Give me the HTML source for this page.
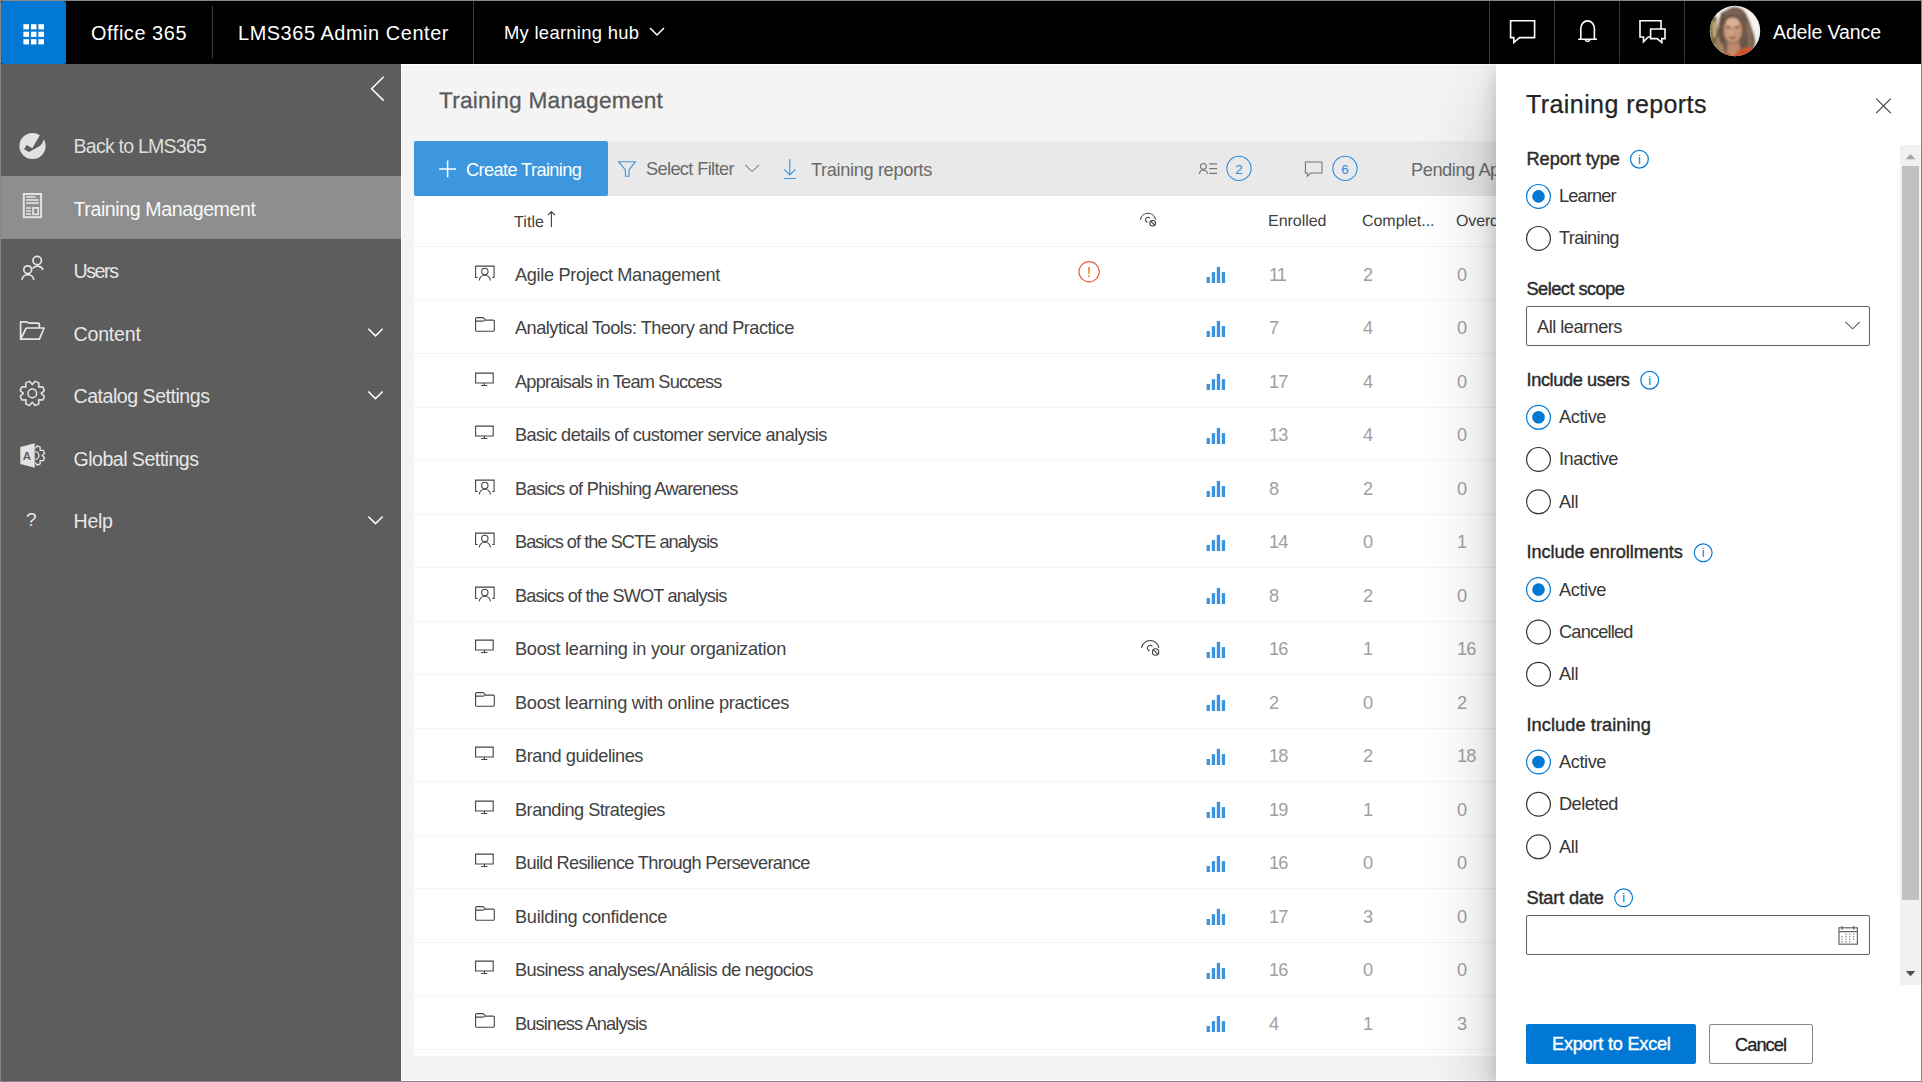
<!DOCTYPE html>
<html lang="en"><head><meta charset="utf-8"><title>LMS365 Admin Center - Training Management</title>
<style>
html,body{margin:0;padding:0;background:#fff;}
body{width:1922px;height:1082px;overflow:hidden;position:relative;font-family:"Liberation Sans",sans-serif;}
#app{position:absolute;left:0;top:0;width:1922px;height:1082px;overflow:hidden;background:#f4f4f4;}
.t{position:absolute;height:40px;line-height:40px;white-space:nowrap;}
.abs{position:absolute;}
svg{position:absolute;left:0;top:0;overflow:visible;}
#frame{position:absolute;left:0;top:0;width:1920px;height:1080px;border:1px solid #878787;pointer-events:none;z-index:50;}
</style></head><body><div id="app">

<div class="abs" style="left:401px;top:64px;width:1521px;height:1017px;background:#fff"></div>
<div class="abs" style="left:402px;top:65px;width:1520px;height:1015px;background:#f4f4f4"></div>
<div class="abs" style="left:414px;top:141px;width:1508px;height:55px;background:#e9e9e9"></div>
<div class="abs" style="left:414px;top:196px;width:1508px;height:860px;background:#fff"></div>
<div class="abs" style="left:414px;top:141px;width:194px;height:55px;background:#3c97df;border-radius:2px"></div>
<div class="abs" style="left:0;top:0;width:1922px;height:64px;background:#000"></div>
<div class="abs" style="left:1px;top:1px;width:65px;height:63px;background:#0078d4;border-radius:2px"></div>
<div class="abs" style="left:212px;top:6px;width:1px;height:52px;background:#3d3d3d"></div>
<div class="abs" style="left:473px;top:1px;width:1px;height:63px;background:#3d3d3d"></div>
<div class="abs" style="left:1489px;top:1px;width:1px;height:63px;background:#3a3a3a"></div>
<div class="abs" style="left:1554px;top:1px;width:1px;height:63px;background:#3a3a3a"></div>
<div class="abs" style="left:1619px;top:1px;width:1px;height:63px;background:#3a3a3a"></div>
<div class="abs" style="left:1684px;top:1px;width:1px;height:63px;background:#3a3a3a"></div>
<div class="t " style="left:91.0px;top:13.3px;font-size:19.90px;color:#fff;letter-spacing:0.572px;">Office 365</div>
<div class="t " style="left:238.0px;top:13.3px;font-size:19.90px;color:#fff;letter-spacing:0.571px;">LMS365 Admin Center</div>
<div class="t " style="left:504.0px;top:12.6px;font-size:18.40px;color:#fff;letter-spacing:0.291px;">My learning hub</div>
<div class="t " style="left:1773.0px;top:12.0px;font-size:19.50px;color:#fff;letter-spacing:-0.114px;">Adele Vance</div>
<div class="abs" style="left:0;top:64px;width:401px;height:1018px;background:#5d5d5d"></div>
<div class="abs" style="left:0;top:176px;width:401px;height:63px;background:#8e8e8e"></div>
<div class="t " style="left:73.5px;top:126.3px;font-size:19.60px;color:#dedede;letter-spacing:-0.794px;">Back to LMS365</div>
<div class="t " style="left:73.5px;top:189.3px;font-size:19.60px;color:#f8f8f8;letter-spacing:-0.413px;">Training Management</div>
<div class="t " style="left:73.5px;top:251.3px;font-size:19.60px;color:#e8e8e8;letter-spacing:-1.421px;">Users</div>
<div class="t " style="left:73.5px;top:314.3px;font-size:19.60px;color:#e8e8e8;letter-spacing:-0.192px;">Content</div>
<div class="t " style="left:73.5px;top:376.3px;font-size:19.60px;color:#e8e8e8;letter-spacing:-0.488px;">Catalog Settings</div>
<div class="t " style="left:73.5px;top:439.3px;font-size:19.60px;color:#e8e8e8;letter-spacing:-0.530px;">Global Settings</div>
<div class="t " style="left:73.5px;top:501.3px;font-size:19.60px;color:#e8e8e8;letter-spacing:-0.271px;">Help</div>
<div class="t " style="left:26.0px;top:500.0px;font-size:19.00px;color:#e6e6e6;">?</div>
<div class="t " style="left:439.0px;top:80.0px;font-size:22.70px;color:#5a5a5a;letter-spacing:0.223px;-webkit-text-stroke:0.30px #5a5a5a;text-rendering:geometricPrecision;">Training Management</div>
<div class="t " style="left:466.0px;top:150.0px;font-size:18.20px;color:#fff;letter-spacing:-0.603px;">Create Training</div>
<div class="t " style="left:646.0px;top:149.0px;font-size:18.20px;color:#6a6a6a;letter-spacing:-0.632px;">Select Filter</div>
<div class="t " style="left:811.0px;top:150.0px;font-size:18.20px;color:#6a6a6a;letter-spacing:-0.352px;">Training reports</div>
<div class="t " style="left:1411.0px;top:150.0px;font-size:18.20px;color:#6a6a6a;letter-spacing:-0.424px;">Pending Approvals</div>
<div class="t " style="left:514.0px;top:203.0px;font-size:16.00px;color:#424242;letter-spacing:0.092px;text-rendering:geometricPrecision;">Title</div>
<div class="t " style="left:1268.0px;top:202.0px;font-size:16.00px;color:#424242;letter-spacing:-0.029px;text-rendering:geometricPrecision;">Enrolled</div>
<div class="t " style="left:1362.0px;top:202.0px;font-size:16.00px;color:#424242;letter-spacing:-0.046px;text-rendering:geometricPrecision;">Complet...</div>
<div class="t " style="left:1456.0px;top:202.0px;font-size:16.00px;color:#424242;letter-spacing:-0.145px;text-rendering:geometricPrecision;">Overdue</div>
<div class="abs" style="left:414px;top:246px;width:1508px;height:1px;background:#f4f4f4"></div>
<div class="t " style="left:515.0px;top:255.0px;font-size:18.20px;color:#424242;letter-spacing:-0.346px;">Agile Project Management</div>
<div class="t " style="left:1269.0px;top:255.0px;font-size:18.20px;color:#a0a0a0;letter-spacing:-0.900px;">11</div>
<div class="t " style="left:1363.0px;top:255.0px;font-size:18.20px;color:#a0a0a0;">2</div>
<div class="t " style="left:1457.0px;top:255.0px;font-size:18.20px;color:#a0a0a0;">0</div>
<div class="abs" style="left:414px;top:300px;width:1508px;height:1px;background:#f4f4f4"></div>
<div class="t " style="left:515.0px;top:308.0px;font-size:18.20px;color:#424242;letter-spacing:-0.507px;">Analytical Tools: Theory and Practice</div>
<div class="t " style="left:1269.0px;top:308.0px;font-size:18.20px;color:#a0a0a0;">7</div>
<div class="t " style="left:1363.0px;top:308.0px;font-size:18.20px;color:#a0a0a0;">4</div>
<div class="t " style="left:1457.0px;top:308.0px;font-size:18.20px;color:#a0a0a0;">0</div>
<div class="abs" style="left:414px;top:353px;width:1508px;height:1px;background:#f4f4f4"></div>
<div class="t " style="left:515.0px;top:362.0px;font-size:18.20px;color:#424242;letter-spacing:-0.791px;">Appraisals in Team Success</div>
<div class="t " style="left:1269.0px;top:362.0px;font-size:18.20px;color:#a0a0a0;letter-spacing:-0.900px;">17</div>
<div class="t " style="left:1363.0px;top:362.0px;font-size:18.20px;color:#a0a0a0;">4</div>
<div class="t " style="left:1457.0px;top:362.0px;font-size:18.20px;color:#a0a0a0;">0</div>
<div class="abs" style="left:414px;top:407px;width:1508px;height:1px;background:#f4f4f4"></div>
<div class="t " style="left:515.0px;top:415.0px;font-size:18.20px;color:#424242;letter-spacing:-0.569px;">Basic details of customer service analysis</div>
<div class="t " style="left:1269.0px;top:415.0px;font-size:18.20px;color:#a0a0a0;letter-spacing:-0.900px;">13</div>
<div class="t " style="left:1363.0px;top:415.0px;font-size:18.20px;color:#a0a0a0;">4</div>
<div class="t " style="left:1457.0px;top:415.0px;font-size:18.20px;color:#a0a0a0;">0</div>
<div class="abs" style="left:414px;top:460px;width:1508px;height:1px;background:#f4f4f4"></div>
<div class="t " style="left:515.0px;top:469.0px;font-size:18.20px;color:#424242;letter-spacing:-0.703px;">Basics of Phishing Awareness</div>
<div class="t " style="left:1269.0px;top:469.0px;font-size:18.20px;color:#a0a0a0;">8</div>
<div class="t " style="left:1363.0px;top:469.0px;font-size:18.20px;color:#a0a0a0;">2</div>
<div class="t " style="left:1457.0px;top:469.0px;font-size:18.20px;color:#a0a0a0;">0</div>
<div class="abs" style="left:414px;top:514px;width:1508px;height:1px;background:#f4f4f4"></div>
<div class="t " style="left:515.0px;top:522.0px;font-size:18.20px;color:#424242;letter-spacing:-0.966px;">Basics of the SCTE analysis</div>
<div class="t " style="left:1269.0px;top:522.0px;font-size:18.20px;color:#a0a0a0;letter-spacing:-0.900px;">14</div>
<div class="t " style="left:1363.0px;top:522.0px;font-size:18.20px;color:#a0a0a0;">0</div>
<div class="t " style="left:1457.0px;top:522.0px;font-size:18.20px;color:#a0a0a0;">1</div>
<div class="abs" style="left:414px;top:567px;width:1508px;height:1px;background:#f4f4f4"></div>
<div class="t " style="left:515.0px;top:576.0px;font-size:18.20px;color:#424242;letter-spacing:-0.840px;">Basics of the SWOT analysis</div>
<div class="t " style="left:1269.0px;top:576.0px;font-size:18.20px;color:#a0a0a0;">8</div>
<div class="t " style="left:1363.0px;top:576.0px;font-size:18.20px;color:#a0a0a0;">2</div>
<div class="t " style="left:1457.0px;top:576.0px;font-size:18.20px;color:#a0a0a0;">0</div>
<div class="abs" style="left:414px;top:621px;width:1508px;height:1px;background:#f4f4f4"></div>
<div class="t " style="left:515.0px;top:629.0px;font-size:18.20px;color:#424242;letter-spacing:-0.258px;">Boost learning in your organization</div>
<div class="t " style="left:1269.0px;top:629.0px;font-size:18.20px;color:#a0a0a0;letter-spacing:-0.900px;">16</div>
<div class="t " style="left:1363.0px;top:629.0px;font-size:18.20px;color:#a0a0a0;">1</div>
<div class="t " style="left:1457.0px;top:629.0px;font-size:18.20px;color:#a0a0a0;letter-spacing:-0.900px;">16</div>
<div class="abs" style="left:414px;top:674px;width:1508px;height:1px;background:#f4f4f4"></div>
<div class="t " style="left:515.0px;top:683.0px;font-size:18.20px;color:#424242;letter-spacing:-0.309px;">Boost learning with online practices</div>
<div class="t " style="left:1269.0px;top:683.0px;font-size:18.20px;color:#a0a0a0;">2</div>
<div class="t " style="left:1363.0px;top:683.0px;font-size:18.20px;color:#a0a0a0;">0</div>
<div class="t " style="left:1457.0px;top:683.0px;font-size:18.20px;color:#a0a0a0;">2</div>
<div class="abs" style="left:414px;top:728px;width:1508px;height:1px;background:#f4f4f4"></div>
<div class="t " style="left:515.0px;top:736.0px;font-size:18.20px;color:#424242;letter-spacing:-0.473px;">Brand guidelines</div>
<div class="t " style="left:1269.0px;top:736.0px;font-size:18.20px;color:#a0a0a0;letter-spacing:-0.900px;">18</div>
<div class="t " style="left:1363.0px;top:736.0px;font-size:18.20px;color:#a0a0a0;">2</div>
<div class="t " style="left:1457.0px;top:736.0px;font-size:18.20px;color:#a0a0a0;letter-spacing:-0.900px;">18</div>
<div class="abs" style="left:414px;top:781px;width:1508px;height:1px;background:#f4f4f4"></div>
<div class="t " style="left:515.0px;top:790.0px;font-size:18.20px;color:#424242;letter-spacing:-0.520px;">Branding Strategies</div>
<div class="t " style="left:1269.0px;top:790.0px;font-size:18.20px;color:#a0a0a0;letter-spacing:-0.900px;">19</div>
<div class="t " style="left:1363.0px;top:790.0px;font-size:18.20px;color:#a0a0a0;">1</div>
<div class="t " style="left:1457.0px;top:790.0px;font-size:18.20px;color:#a0a0a0;">0</div>
<div class="abs" style="left:414px;top:835px;width:1508px;height:1px;background:#f4f4f4"></div>
<div class="t " style="left:515.0px;top:843.0px;font-size:18.20px;color:#424242;letter-spacing:-0.663px;">Build Resilience Through Perseverance</div>
<div class="t " style="left:1269.0px;top:843.0px;font-size:18.20px;color:#a0a0a0;letter-spacing:-0.900px;">16</div>
<div class="t " style="left:1363.0px;top:843.0px;font-size:18.20px;color:#a0a0a0;">0</div>
<div class="t " style="left:1457.0px;top:843.0px;font-size:18.20px;color:#a0a0a0;">0</div>
<div class="abs" style="left:414px;top:888px;width:1508px;height:1px;background:#f4f4f4"></div>
<div class="t " style="left:515.0px;top:897.0px;font-size:18.20px;color:#424242;letter-spacing:-0.297px;">Building confidence</div>
<div class="t " style="left:1269.0px;top:897.0px;font-size:18.20px;color:#a0a0a0;letter-spacing:-0.900px;">17</div>
<div class="t " style="left:1363.0px;top:897.0px;font-size:18.20px;color:#a0a0a0;">3</div>
<div class="t " style="left:1457.0px;top:897.0px;font-size:18.20px;color:#a0a0a0;">0</div>
<div class="abs" style="left:414px;top:942px;width:1508px;height:1px;background:#f4f4f4"></div>
<div class="t " style="left:515.0px;top:950.0px;font-size:18.20px;color:#424242;letter-spacing:-0.628px;">Business analyses/Análisis de negocios</div>
<div class="t " style="left:1269.0px;top:950.0px;font-size:18.20px;color:#a0a0a0;letter-spacing:-0.900px;">16</div>
<div class="t " style="left:1363.0px;top:950.0px;font-size:18.20px;color:#a0a0a0;">0</div>
<div class="t " style="left:1457.0px;top:950.0px;font-size:18.20px;color:#a0a0a0;">0</div>
<div class="abs" style="left:414px;top:995px;width:1508px;height:1px;background:#f4f4f4"></div>
<div class="t " style="left:515.0px;top:1004.0px;font-size:18.20px;color:#424242;letter-spacing:-0.823px;">Business Analysis</div>
<div class="t " style="left:1269.0px;top:1004.0px;font-size:18.20px;color:#a0a0a0;">4</div>
<div class="t " style="left:1363.0px;top:1004.0px;font-size:18.20px;color:#a0a0a0;">1</div>
<div class="t " style="left:1457.0px;top:1004.0px;font-size:18.20px;color:#a0a0a0;">3</div>
<div class="abs" style="left:414px;top:1049px;width:1508px;height:1px;background:#f4f4f4"></div>
<svg width="1922" height="1082" viewBox="0 0 1922 1082">
<rect x="23.4" y="24.2" width="5.6" height="5.2" fill="#fff"/>
<rect x="30.9" y="24.2" width="5.6" height="5.2" fill="#fff"/>
<rect x="38.4" y="24.2" width="5.6" height="5.2" fill="#fff"/>
<rect x="23.4" y="31.7" width="5.6" height="5.2" fill="#fff"/>
<rect x="30.9" y="31.7" width="5.6" height="5.2" fill="#fff"/>
<rect x="38.4" y="31.7" width="5.6" height="5.2" fill="#fff"/>
<rect x="23.4" y="39.2" width="5.6" height="5.2" fill="#fff"/>
<rect x="30.9" y="39.2" width="5.6" height="5.2" fill="#fff"/>
<rect x="38.4" y="39.2" width="5.6" height="5.2" fill="#fff"/>
<path d="M383.7 76.8 L371.6 88.7 L383.7 100.6" fill="none" stroke="#fff" stroke-width="1.5"/>
<path d="M368.3 328.8 L375.5 335.9 L382.7 328.8" fill="none" stroke="#fff" stroke-width="1.5"/>
<path d="M368.3 391.5 L375.5 398.6 L382.7 391.5" fill="none" stroke="#fff" stroke-width="1.5"/>
<path d="M368.3 516.5 L375.5 523.6 L382.7 516.5" fill="none" stroke="#fff" stroke-width="1.5"/>
<path d="M650 28 L657 35 L664 28" fill="none" stroke="#fff" stroke-width="1.5"/>
<circle cx="32.5" cy="146" r="13.1" fill="#e2e2e2"/>
<path d="M24.1 149.2 L26.6 145.1 L32.3 148.3 L40.4 134.2 L44.5 131 L48 137 L43.7 139.6 Q42.5 144.5 38.5 146.8 L28.9 152 Z" fill="#5d5d5d"/>
<rect x="23.8" y="194" width="17.3" height="23.2" fill="none" stroke="#e4e4e4" stroke-width="2"/>
<path d="M26.2 196.9 H35.5" stroke="#e4e4e4" stroke-width="1.6"/>
<path d="M26.2 200 H38.7" stroke="#e4e4e4" stroke-width="1.6"/>
<path d="M26.2 203 H38.7" stroke="#e4e4e4" stroke-width="1.6"/>
<path d="M26.2 208 H31" stroke="#e4e4e4" stroke-width="1.6"/>
<path d="M26.2 211 H31" stroke="#e4e4e4" stroke-width="1.6"/>
<path d="M26.2 214 H31" stroke="#e4e4e4" stroke-width="1.6"/>
<rect x="33" y="207.9" width="5.2" height="6.4" fill="none" stroke="#e4e4e4" stroke-width="1.7"/>
<g fill="none" stroke="#e6e6e6" stroke-width="1.7">
<circle cx="37.2" cy="260.5" r="4.2"/>
<path d="M32.6 268.6 A6 6 0 0 1 43 269.9"/>
<circle cx="27.7" cy="269.7" r="3.9"/>
<path d="M21.9 279.8 A6 6 0 0 1 33.8 279.8"/>
</g>
<path d="M20.6 339.1 V321.9 H26.6 L28.9 323.1 H38 Q39.4 323.1 39.4 324.5 V328 M26.2 328 H44.1 L39.4 339.1 H20.6 L26.2 328" fill="none" stroke="#e6e6e6" stroke-width="1.7" stroke-linejoin="round"/>
<path d="M32.3 384.5 L35.09 381.32 L38.87 382.88 L38.59 387.11 L42.82 386.83 L44.38 390.61 L41.2 393.4 L44.38 396.19 L42.82 399.97 L38.59 399.69 L38.87 403.92 L35.09 405.48 L32.3 402.3 L29.51 405.48 L25.73 403.92 L26.01 399.69 L21.78 399.97 L20.22 396.19 L23.4 393.4 L20.22 390.61 L21.78 386.83 L26.01 387.11 L25.73 382.88 L29.51 381.32 Z" fill="none" stroke="#e6e6e6" stroke-width="1.5" stroke-linejoin="round"/>
<circle cx="32.3" cy="393.4" r="4.3" fill="none" stroke="#e6e6e6" stroke-width="1.5"/>
<clipPath id="gclip"><rect x="35.2" y="440" width="14" height="32"/></clipPath>
<g clip-path="url(#gclip)"><path d="M35 448.3 L37.2 445.95 L40.19 447.19 L40.09 450.41 L43.31 450.31 L44.55 453.3 L42.2 455.5 L44.55 457.7 L43.31 460.69 L40.09 460.59 L40.19 463.81 L37.2 465.05 L35 462.7 L32.8 465.05 L29.81 463.81 L29.91 460.59 L26.69 460.69 L25.45 457.7 L27.8 455.5 L25.45 453.3 L26.69 450.31 L29.91 450.41 L29.81 447.19 L32.8 445.95 Z" fill="none" stroke="#e6e6e6" stroke-width="1.3" stroke-linejoin="round"/>
<circle cx="35" cy="455.5" r="3.9" fill="none" stroke="#e6e6e6" stroke-width="1.3"/></g>
<path d="M20.3 446.9 L34.7 443.3 V467.7 L20.3 464.1 Z" fill="#e2e2e2"/>
<text x="26.9" y="459.9" font-family="Liberation Sans, sans-serif" font-weight="bold" font-size="11.5" text-anchor="middle" fill="#5d5d5d">A</text>
<g fill="none" stroke="#fff" stroke-width="1.6" stroke-linejoin="miter">
<path d="M1510.6 20.8 H1534.6 V37.6 H1519.5 L1513.8 42.6 V37.6 H1510.6 Z"/>
<path d="M1578.2 39.2 H1597 M1580.8 39.2 V28.5 A6.8 7.6 0 0 1 1594.4 28.5 V39.2 M1585.2 39.6 A2.5 2.5 0 0 0 1590 39.6"/>
<path d="M1661 29 V20.8 H1640 V37 H1643.5 V41.8 L1648.2 37 H1650"/>
<path d="M1650.6 29 H1665 V38.6 H1661.8 V42.6 L1657.2 38.6 H1650.6 Z"/>
</g>
<defs><clipPath id="avc"><circle cx="1735" cy="31" r="25.2"/></clipPath><filter id="avb" x="-20%" y="-20%" width="140%" height="140%"><feGaussianBlur stdDeviation="0.9"/></filter></defs>
<g clip-path="url(#avc)"><rect x="1708" y="4" width="54" height="54" fill="#f6f4f1"/><g filter="url(#avb)">
<path d="M1709 18 L1716.5 16 L1717.5 44 L1710 46 Z" fill="#7b6b42"/>
<path d="M1712.5 22 L1715.5 21 L1716 36 L1713 38 Z" fill="#c8b27c"/>
<path d="M1724.5 12 Q1729 7 1736 7.2 Q1743 8 1746.5 15 Q1750.5 24 1753.5 34 Q1757 44 1752 51 L1746 57 H1721 Q1713.5 50 1715.5 40 Q1717.5 30 1719 22 Q1720 15 1722 12 Z" fill="#6e5848"/>
<path d="M1716.5 38 Q1715 47 1721 55 L1727 55 Q1721 46 1722 34 Z" fill="#a98b63"/>
<path d="M1747 22 Q1752 32 1752 46 L1748 50 Q1750 36 1745 24 Z" fill="#8d745c"/>
<path d="M1724 11 Q1733 8 1742 12 L1740 16 Q1732 12 1725 16 Z" fill="#7d6552"/>
<ellipse cx="1732.8" cy="30.5" rx="9.2" ry="12.8" fill="#c7977b"/>
<ellipse cx="1732.5" cy="22.5" rx="6.5" ry="4.6" fill="#dcb397"/>
<ellipse cx="1731" cy="33" rx="3.2" ry="3.6" fill="#d3a486"/>
<ellipse cx="1728.3" cy="27.2" rx="2.3" ry="0.9" fill="#5b4135"/><ellipse cx="1737.3" cy="27.2" rx="2.3" ry="0.9" fill="#5b4135"/>
<ellipse cx="1732.8" cy="37.8" rx="3.1" ry="1.1" fill="#8c544b"/>
<path d="M1741 20 Q1744 30 1741.5 42 L1746 44 Q1749 30 1744 17 Z" fill="#6e5848"/>
<path d="M1724.5 20 Q1722.5 30 1724.5 41 L1720 44 Q1718 30 1722 17 Z" fill="#66503f"/>
<path d="M1727.5 42 Q1733 46.5 1739 41.5 L1741 53 H1727 Z" fill="#c18d70"/>
<path d="M1724 54 Q1731 51.5 1738 50.5 Q1745 48 1750 46.5 L1754 52 L1746 58 H1722 Z" fill="#d5562a"/>
<path d="M1728 52 L1733 57 L1738.5 50.5 Z" fill="#c8957a"/>
</g></g>
<path d="M439.2 168.9 H456 M447.6 160.5 V177.3" stroke="#fff" stroke-width="1.5" fill="none"/>
<path d="M618.6 161.7 H635.4 L629 170 V176.3 H625.4 V170 Z" fill="none" stroke="#3c97df" stroke-width="1.1" stroke-linejoin="miter"/>
<path d="M745.2 165 L752.1 171.6 L759 165" fill="none" stroke="#8a8a8a" stroke-width="1.1"/>
<path d="M789.8 159.3 V174.6 M784.2 169.4 L789.8 175 L795.4 169.4 M784 178.5 H795.8" fill="none" stroke="#3c97df" stroke-width="1.2"/>
<g fill="none" stroke="#777" stroke-width="1.1"><circle cx="1203.4" cy="166.4" r="2.9"/><path d="M1199.3 174 A4.2 4.4 0 0 1 1207.6 174"/><path d="M1209.2 163.8 H1217 M1209.2 168.6 H1217 M1209.2 173.3 H1217" stroke-width="1.2"/></g>
<path d="M1305.4 162 H1322 V173 H1310.6 L1307.4 176.2 V173 H1305.4 Z" fill="none" stroke="#777" stroke-width="1.1"/>
<circle cx="1239" cy="168.4" r="12.1" fill="none" stroke="#2b8ce0" stroke-width="1.1"/>
<text x="1239" y="173.7" font-family="Liberation Sans, sans-serif" font-size="13.4" text-anchor="middle" fill="#2b8ce0">2</text>
<circle cx="1345" cy="168.4" r="12.1" fill="none" stroke="#2b8ce0" stroke-width="1.1"/>
<text x="1345" y="173.7" font-family="Liberation Sans, sans-serif" font-size="13.4" text-anchor="middle" fill="#2b8ce0">6</text>
<path d="M551.4 227 V211.3 M547.9 215.1 L551.4 211.5 L554.9 215.1" fill="none" stroke="#444" stroke-width="1.15"/>
<g fill="none" stroke="#3a3a3a" stroke-width="1.05"><path d="M1140.43 219.56 A7.7 7.7 0 0 1 1155.57 219.56"/><path d="M1149.92 218.24 A2.44 2.44 0 1 0 1147.58 222.14"/><circle cx="1152.7" cy="223.22" r="2.78"/><path d="M1150.7 221.22 L1154.7 225.22"/></g>
<g fill="none" stroke="#3a3a3a" stroke-width="1.05"><path d="M1141.5 647.8 A8.85 8.85 0 0 1 1158.9 647.8"/><path d="M1152.41 646.28 A2.8 2.8 0 1 0 1149.71 650.76"/><circle cx="1155.6" cy="652" r="3.2"/><path d="M1153.3 649.7 L1157.9 654.3"/></g>
<circle cx="1089.1" cy="271.8" r="10.1" fill="none" stroke="#e8603c" stroke-width="1.15"/>
<text x="1089.1" y="276.8" font-family="Liberation Sans, sans-serif" font-size="14.6" text-anchor="middle" fill="#e8603c">!</text>
<rect x="1206.6" y="277" width="3.3" height="6" fill="#3a93df"/>
<rect x="1211.8" y="272.1" width="3.3" height="10.9" fill="#3a93df"/>
<rect x="1216.8" y="266.9" width="3.3" height="16.1" fill="#3a93df"/>
<rect x="1221.8" y="272.1" width="3.3" height="10.9" fill="#3a93df"/>
<g fill="none" stroke="#444" stroke-width="1.1"><path d="M477.7 277.5 H475.6 V266.1 H494.1 V277.5 H492.3"/><circle cx="484.8" cy="271.5" r="3.2"/><path d="M479.2 280.5 A5.7 6 0 0 1 490.5 280.5"/></g>
<rect x="1206.6" y="331" width="3.3" height="6" fill="#3a93df"/>
<rect x="1211.8" y="326.1" width="3.3" height="10.9" fill="#3a93df"/>
<rect x="1216.8" y="320.9" width="3.3" height="16.1" fill="#3a93df"/>
<rect x="1221.8" y="326.1" width="3.3" height="10.9" fill="#3a93df"/>
<path d="M475.6 321.75 V318.75 Q475.6 317.65 476.8 317.65 H482.6 Q484 317.65 485.5 320.15 H493.2 Q494.3 320.15 494.3 321.25 V330.15 Q494.3 331.25 493.2 331.25 H476.7 Q475.6 331.25 475.6 330.15 Z M475.6 321.15 H482.6 Q484.2 321.15 485.5 320.15" fill="none" stroke="#444" stroke-width="1.1"/>
<rect x="1206.6" y="384" width="3.3" height="6" fill="#3a93df"/>
<rect x="1211.8" y="379.1" width="3.3" height="10.9" fill="#3a93df"/>
<rect x="1216.8" y="373.9" width="3.3" height="16.1" fill="#3a93df"/>
<rect x="1221.8" y="379.1" width="3.3" height="10.9" fill="#3a93df"/>
<path d="M475.6 373.1 H493.2 V383 H475.6 Z M484.4 383 V385.5 M481.2 385.5 H487.4" fill="none" stroke="#444" stroke-width="1.1"/>
<rect x="1206.6" y="438" width="3.3" height="6" fill="#3a93df"/>
<rect x="1211.8" y="433.1" width="3.3" height="10.9" fill="#3a93df"/>
<rect x="1216.8" y="427.9" width="3.3" height="16.1" fill="#3a93df"/>
<rect x="1221.8" y="433.1" width="3.3" height="10.9" fill="#3a93df"/>
<path d="M475.6 426.1 H493.2 V436 H475.6 Z M484.4 436 V438.5 M481.2 438.5 H487.4" fill="none" stroke="#444" stroke-width="1.1"/>
<rect x="1206.6" y="491" width="3.3" height="6" fill="#3a93df"/>
<rect x="1211.8" y="486.1" width="3.3" height="10.9" fill="#3a93df"/>
<rect x="1216.8" y="480.9" width="3.3" height="16.1" fill="#3a93df"/>
<rect x="1221.8" y="486.1" width="3.3" height="10.9" fill="#3a93df"/>
<g fill="none" stroke="#444" stroke-width="1.1"><path d="M477.7 491.5 H475.6 V480.1 H494.1 V491.5 H492.3"/><circle cx="484.8" cy="485.5" r="3.2"/><path d="M479.2 494.5 A5.7 6 0 0 1 490.5 494.5"/></g>
<rect x="1206.6" y="545" width="3.3" height="6" fill="#3a93df"/>
<rect x="1211.8" y="540.1" width="3.3" height="10.9" fill="#3a93df"/>
<rect x="1216.8" y="534.9" width="3.3" height="16.1" fill="#3a93df"/>
<rect x="1221.8" y="540.1" width="3.3" height="10.9" fill="#3a93df"/>
<g fill="none" stroke="#444" stroke-width="1.1"><path d="M477.7 544.5 H475.6 V533.1 H494.1 V544.5 H492.3"/><circle cx="484.8" cy="538.5" r="3.2"/><path d="M479.2 547.5 A5.7 6 0 0 1 490.5 547.5"/></g>
<rect x="1206.6" y="598" width="3.3" height="6" fill="#3a93df"/>
<rect x="1211.8" y="593.1" width="3.3" height="10.9" fill="#3a93df"/>
<rect x="1216.8" y="587.9" width="3.3" height="16.1" fill="#3a93df"/>
<rect x="1221.8" y="593.1" width="3.3" height="10.9" fill="#3a93df"/>
<g fill="none" stroke="#444" stroke-width="1.1"><path d="M477.7 598.5 H475.6 V587.1 H494.1 V598.5 H492.3"/><circle cx="484.8" cy="592.5" r="3.2"/><path d="M479.2 601.5 A5.7 6 0 0 1 490.5 601.5"/></g>
<rect x="1206.6" y="652" width="3.3" height="6" fill="#3a93df"/>
<rect x="1211.8" y="647.1" width="3.3" height="10.9" fill="#3a93df"/>
<rect x="1216.8" y="641.9" width="3.3" height="16.1" fill="#3a93df"/>
<rect x="1221.8" y="647.1" width="3.3" height="10.9" fill="#3a93df"/>
<path d="M475.6 640.1 H493.2 V650 H475.6 Z M484.4 650 V652.5 M481.2 652.5 H487.4" fill="none" stroke="#444" stroke-width="1.1"/>
<rect x="1206.6" y="705" width="3.3" height="6" fill="#3a93df"/>
<rect x="1211.8" y="700.1" width="3.3" height="10.9" fill="#3a93df"/>
<rect x="1216.8" y="694.9" width="3.3" height="16.1" fill="#3a93df"/>
<rect x="1221.8" y="700.1" width="3.3" height="10.9" fill="#3a93df"/>
<path d="M475.6 696.75 V693.75 Q475.6 692.65 476.8 692.65 H482.6 Q484 692.65 485.5 695.15 H493.2 Q494.3 695.15 494.3 696.25 V705.15 Q494.3 706.25 493.2 706.25 H476.7 Q475.6 706.25 475.6 705.15 Z M475.6 696.15 H482.6 Q484.2 696.15 485.5 695.15" fill="none" stroke="#444" stroke-width="1.1"/>
<rect x="1206.6" y="759" width="3.3" height="6" fill="#3a93df"/>
<rect x="1211.8" y="754.1" width="3.3" height="10.9" fill="#3a93df"/>
<rect x="1216.8" y="748.9" width="3.3" height="16.1" fill="#3a93df"/>
<rect x="1221.8" y="754.1" width="3.3" height="10.9" fill="#3a93df"/>
<path d="M475.6 747.1 H493.2 V757 H475.6 Z M484.4 757 V759.5 M481.2 759.5 H487.4" fill="none" stroke="#444" stroke-width="1.1"/>
<rect x="1206.6" y="812" width="3.3" height="6" fill="#3a93df"/>
<rect x="1211.8" y="807.1" width="3.3" height="10.9" fill="#3a93df"/>
<rect x="1216.8" y="801.9" width="3.3" height="16.1" fill="#3a93df"/>
<rect x="1221.8" y="807.1" width="3.3" height="10.9" fill="#3a93df"/>
<path d="M475.6 801.1 H493.2 V811 H475.6 Z M484.4 811 V813.5 M481.2 813.5 H487.4" fill="none" stroke="#444" stroke-width="1.1"/>
<rect x="1206.6" y="866" width="3.3" height="6" fill="#3a93df"/>
<rect x="1211.8" y="861.1" width="3.3" height="10.9" fill="#3a93df"/>
<rect x="1216.8" y="855.9" width="3.3" height="16.1" fill="#3a93df"/>
<rect x="1221.8" y="861.1" width="3.3" height="10.9" fill="#3a93df"/>
<path d="M475.6 854.1 H493.2 V864 H475.6 Z M484.4 864 V866.5 M481.2 866.5 H487.4" fill="none" stroke="#444" stroke-width="1.1"/>
<rect x="1206.6" y="919" width="3.3" height="6" fill="#3a93df"/>
<rect x="1211.8" y="914.1" width="3.3" height="10.9" fill="#3a93df"/>
<rect x="1216.8" y="908.9" width="3.3" height="16.1" fill="#3a93df"/>
<rect x="1221.8" y="914.1" width="3.3" height="10.9" fill="#3a93df"/>
<path d="M475.6 910.75 V907.75 Q475.6 906.65 476.8 906.65 H482.6 Q484 906.65 485.5 909.15 H493.2 Q494.3 909.15 494.3 910.25 V919.15 Q494.3 920.25 493.2 920.25 H476.7 Q475.6 920.25 475.6 919.15 Z M475.6 910.15 H482.6 Q484.2 910.15 485.5 909.15" fill="none" stroke="#444" stroke-width="1.1"/>
<rect x="1206.6" y="973" width="3.3" height="6" fill="#3a93df"/>
<rect x="1211.8" y="968.1" width="3.3" height="10.9" fill="#3a93df"/>
<rect x="1216.8" y="962.9" width="3.3" height="16.1" fill="#3a93df"/>
<rect x="1221.8" y="968.1" width="3.3" height="10.9" fill="#3a93df"/>
<path d="M475.6 961.1 H493.2 V971 H475.6 Z M484.4 971 V973.5 M481.2 973.5 H487.4" fill="none" stroke="#444" stroke-width="1.1"/>
<rect x="1206.6" y="1026" width="3.3" height="6" fill="#3a93df"/>
<rect x="1211.8" y="1021.1" width="3.3" height="10.9" fill="#3a93df"/>
<rect x="1216.8" y="1015.9" width="3.3" height="16.1" fill="#3a93df"/>
<rect x="1221.8" y="1021.1" width="3.3" height="10.9" fill="#3a93df"/>
<path d="M475.6 1017.75 V1014.75 Q475.6 1013.65 476.8 1013.65 H482.6 Q484 1013.65 485.5 1016.15 H493.2 Q494.3 1016.15 494.3 1017.25 V1026.15 Q494.3 1027.25 493.2 1027.25 H476.7 Q475.6 1027.25 475.6 1026.15 Z M475.6 1017.15 H482.6 Q484.2 1017.15 485.5 1016.15" fill="none" stroke="#444" stroke-width="1.1"/>
</svg>
<div class="abs" style="left:1496px;top:64px;width:426px;height:1018px;background:#fff;box-shadow:0 32px 72px 0 rgba(0,0,0,.22),0 6px 18px 0 rgba(0,0,0,.18)"></div>
<div class="t " style="left:1526.0px;top:84.0px;font-size:25.00px;color:#252423;letter-spacing:0.423px;-webkit-text-stroke:0.25px #252423;">Training reports</div>
<div class="t " style="left:1526.5px;top:139.0px;font-size:18.20px;color:#2b2b2b;letter-spacing:-0.059px;-webkit-text-stroke:0.40px #2b2b2b;">Report type</div>
<div class="t " style="left:1526.5px;top:269.0px;font-size:18.20px;color:#2b2b2b;letter-spacing:-0.519px;-webkit-text-stroke:0.40px #2b2b2b;">Select scope</div>
<div class="t " style="left:1526.5px;top:360.0px;font-size:18.20px;color:#2b2b2b;letter-spacing:-0.396px;-webkit-text-stroke:0.40px #2b2b2b;">Include users</div>
<div class="t " style="left:1526.5px;top:532.0px;font-size:18.20px;color:#2b2b2b;letter-spacing:-0.074px;-webkit-text-stroke:0.40px #2b2b2b;">Include enrollments</div>
<div class="t " style="left:1526.5px;top:705.0px;font-size:18.20px;color:#2b2b2b;letter-spacing:0.071px;-webkit-text-stroke:0.40px #2b2b2b;">Include training</div>
<div class="t " style="left:1526.5px;top:878.0px;font-size:18.20px;color:#2b2b2b;letter-spacing:-0.157px;-webkit-text-stroke:0.40px #2b2b2b;">Start date</div>
<div class="t " style="left:1559.0px;top:176.0px;font-size:18.20px;color:#383838;letter-spacing:-0.872px;">Learner</div>
<div class="t " style="left:1559.0px;top:218.0px;font-size:18.20px;color:#383838;letter-spacing:-0.654px;">Training</div>
<div class="t " style="left:1559.0px;top:397.0px;font-size:18.20px;color:#383838;letter-spacing:-0.412px;">Active</div>
<div class="t " style="left:1559.0px;top:439.0px;font-size:18.20px;color:#383838;letter-spacing:-0.460px;">Inactive</div>
<div class="t " style="left:1559.0px;top:482.0px;font-size:18.20px;color:#383838;letter-spacing:-0.364px;">All</div>
<div class="t " style="left:1559.0px;top:570.0px;font-size:18.20px;color:#383838;letter-spacing:-0.412px;">Active</div>
<div class="t " style="left:1559.0px;top:612.0px;font-size:18.20px;color:#383838;letter-spacing:-0.805px;">Cancelled</div>
<div class="t " style="left:1559.0px;top:654.0px;font-size:18.20px;color:#383838;letter-spacing:-0.364px;">All</div>
<div class="t " style="left:1559.0px;top:742.0px;font-size:18.20px;color:#383838;letter-spacing:-0.412px;">Active</div>
<div class="t " style="left:1559.0px;top:784.0px;font-size:18.20px;color:#383838;letter-spacing:-0.539px;">Deleted</div>
<div class="t " style="left:1559.0px;top:827.0px;font-size:18.20px;color:#383838;letter-spacing:-0.364px;">All</div>
<div class="abs" style="left:1526px;top:305.5px;width:342px;height:38px;border:1px solid #605e5c;border-radius:2px;background:#fff"></div>
<div class="t " style="left:1537.0px;top:307.0px;font-size:18.20px;color:#383838;letter-spacing:-0.504px;">All learners</div>
<div class="abs" style="left:1526px;top:915px;width:342px;height:38px;border:1px solid #605e5c;border-radius:2px;background:#fff"></div>
<div class="abs" style="left:1526px;top:1024px;width:170px;height:40px;background:#0078d4;border-radius:2px"></div>
<div class="t " style="left:1552.0px;top:1024.0px;font-size:18.20px;color:#fff;letter-spacing:-0.243px;-webkit-text-stroke:0.40px #fff;">Export to Excel</div>
<div class="abs" style="left:1709px;top:1024px;width:102px;height:38px;border:1px solid #8a8886;border-radius:2px;background:#fff"></div>
<div class="t " style="left:1735.0px;top:1025.0px;font-size:18.20px;color:#222;letter-spacing:-0.931px;-webkit-text-stroke:0.30px #222;">Cancel</div>
<div class="abs" style="left:1900px;top:145px;width:21px;height:839.5px;background:#f1f1f1"></div>
<div class="abs" style="left:1902.3px;top:166px;width:16.8px;height:733.5px;background:#c1c1c1"></div>
<svg width="1922" height="1082" viewBox="0 0 1922 1082">
<path d="M1876.2 98.6 L1890.8 113.2 M1890.8 98.6 L1876.2 113.2" stroke="#444" stroke-width="1.2" fill="none"/>
<circle cx="1639.4" cy="159.2" r="8.9" fill="none" stroke="#0078d4" stroke-width="1.2"/>
<text x="1639.4" y="163.6" font-family="Liberation Sans, sans-serif" font-size="12.5" text-anchor="middle" fill="#0078d4">i</text>
<circle cx="1649.7" cy="380.2" r="8.9" fill="none" stroke="#0078d4" stroke-width="1.2"/>
<text x="1649.7" y="384.6" font-family="Liberation Sans, sans-serif" font-size="12.5" text-anchor="middle" fill="#0078d4">i</text>
<circle cx="1703.2" cy="552.8" r="8.9" fill="none" stroke="#0078d4" stroke-width="1.2"/>
<text x="1703.2" y="557.2" font-family="Liberation Sans, sans-serif" font-size="12.5" text-anchor="middle" fill="#0078d4">i</text>
<circle cx="1623.6" cy="897.8" r="8.9" fill="none" stroke="#0078d4" stroke-width="1.2"/>
<text x="1623.6" y="902.2" font-family="Liberation Sans, sans-serif" font-size="12.5" text-anchor="middle" fill="#0078d4">i</text>
<circle cx="1538.5" cy="196.4" r="11.9" fill="#fff" stroke="#0078d4" stroke-width="1.2"/><circle cx="1538.5" cy="196.4" r="6.3" fill="#0078d4"/>
<circle cx="1538.5" cy="417.3" r="11.9" fill="#fff" stroke="#0078d4" stroke-width="1.2"/><circle cx="1538.5" cy="417.3" r="6.3" fill="#0078d4"/>
<circle cx="1538.5" cy="589.6" r="11.9" fill="#fff" stroke="#0078d4" stroke-width="1.2"/><circle cx="1538.5" cy="589.6" r="6.3" fill="#0078d4"/>
<circle cx="1538.5" cy="762" r="11.9" fill="#fff" stroke="#0078d4" stroke-width="1.2"/><circle cx="1538.5" cy="762" r="6.3" fill="#0078d4"/>
<circle cx="1538.5" cy="238.4" r="11.9" fill="#fff" stroke="#333" stroke-width="1.2"/>
<circle cx="1538.5" cy="459.4" r="11.9" fill="#fff" stroke="#333" stroke-width="1.2"/>
<circle cx="1538.5" cy="501.8" r="11.9" fill="#fff" stroke="#333" stroke-width="1.2"/>
<circle cx="1538.5" cy="632" r="11.9" fill="#fff" stroke="#333" stroke-width="1.2"/>
<circle cx="1538.5" cy="674.2" r="11.9" fill="#fff" stroke="#333" stroke-width="1.2"/>
<circle cx="1538.5" cy="804.2" r="11.9" fill="#fff" stroke="#333" stroke-width="1.2"/>
<circle cx="1538.5" cy="846.8" r="11.9" fill="#fff" stroke="#333" stroke-width="1.2"/>
<path d="M1845.4 321.8 L1852.6 328.8 L1859.8 321.8" fill="none" stroke="#605e5c" stroke-width="1.1"/>
<g fill="none" stroke="#666" stroke-width="1.2"><rect x="1839" y="927.8" width="18.4" height="16.4"/><path d="M1839 931.6 H1857.4 M1842.2 926 V929.8 M1853.7 926 V929.8"/></g>
<rect x="1845.35" y="933.65" width="1.3" height="1.1" fill="#777"/>
<rect x="1849.05" y="933.65" width="1.3" height="1.1" fill="#777"/>
<rect x="1852.85" y="933.65" width="1.3" height="1.1" fill="#777"/>
<rect x="1841.45" y="936.15" width="1.3" height="1.1" fill="#777"/>
<rect x="1845.35" y="936.15" width="1.3" height="1.1" fill="#777"/>
<rect x="1849.05" y="936.15" width="1.3" height="1.1" fill="#777"/>
<rect x="1852.85" y="936.15" width="1.3" height="1.1" fill="#777"/>
<rect x="1841.45" y="938.65" width="1.3" height="1.1" fill="#777"/>
<rect x="1845.35" y="938.65" width="1.3" height="1.1" fill="#777"/>
<rect x="1849.05" y="938.65" width="1.3" height="1.1" fill="#777"/>
<rect x="1852.85" y="938.65" width="1.3" height="1.1" fill="#777"/>
<rect x="1841.45" y="941.05" width="1.3" height="1.1" fill="#777"/>
<rect x="1845.35" y="941.05" width="1.3" height="1.1" fill="#777"/>
<rect x="1849.05" y="941.05" width="1.3" height="1.1" fill="#777"/>
<path d="M1905.7 159.2 L1910.5 153.9 L1915.3 159.2 Z" fill="#a3a3a3"/>
<path d="M1905.7 971 L1910.5 976.2 L1915.3 971 Z" fill="#505050"/>
</svg>
</div><div id="frame"></div></body></html>
